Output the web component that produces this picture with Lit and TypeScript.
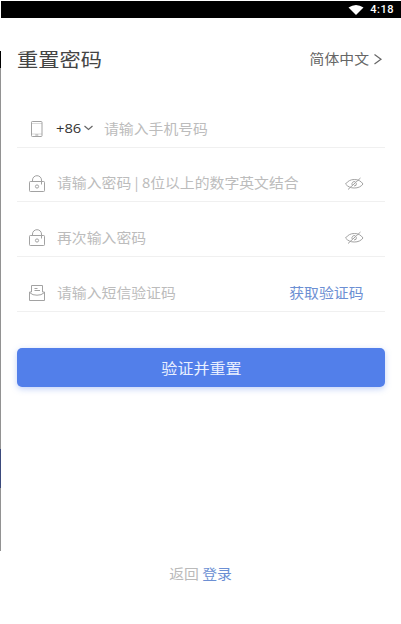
import { LitElement, html, css, svg } from "lit";
import { customElement } from "lit/decorators.js";

const phoneIcon = svg`<svg class="icon" width="18" height="18" viewBox="0 0 18 18"><rect x="3.500" y="2.500" width="10.500" height="15" rx=".8"/><path d="M4 4.500h10" opacity=".4"/><path d="M4 15h10" opacity=".4"/><path d="M7.300 16h3"/></svg>`;
const lockIcon = svg`<svg class="icon" width="18" height="18" viewBox="0 0 18 18"><path d="M4.500 7.500V6a4.500 4.300 0 0 1 9 0V10.500"/><rect x="1.500" y="7.500" width="15" height="10" rx=".8"/><circle cx="9" cy="12.500" r="1.600"/></svg>`;
const mailIcon = svg`<svg class="icon" width="18" height="18" viewBox="0 0 18 18"><path d="M3.500 9V2.500h11V9M6.500 5.500h3M6.500 7.500h5.500M3.500 9h-2v8.500h15V9h-2M1.500 9.500l3.500 2.200q4 1 8 0l3.500-2.200"/></svg>`;
const eyeIcon = svg`<svg class="icon" width="20" height="14" viewBox="0 0 20 14"><path d="M1.500 8C4 5 6.500 3.500 10.300 3.500S17 5 19 8C17 10.800 14 12 10.300 12S4 10.800 1.500 8z"/><path d="M4 13.500L16.500 2M8.200 9a2.400 2.400 0 0 1 3.200-3.200M12.400 7.200A2.400 2.400 0 0 1 10 10"/></svg>`;

@customElement("app-root")
export class AppRoot extends LitElement {
  static styles = css`
    :host {
      display: grid;
      grid-template-columns: 1px 1fr;
      box-sizing: border-box;
      height: 624px;
      background: #fff;
      overflow: hidden;
      font-family: "Noto Sans CJK SC", sans-serif;
      color: #333;
    }
    .edge {
      height: 551px;
      background: linear-gradient(#fff 51px, #000 51px 68px, #929292 68px 449px, #3b4a7c 449px 488px, #929292 488px);
    }
    .page { display: flex; flex-direction: column; padding-top: 1px; }
    .status {
      height: 17px;
      background: #000;
      color: #fff;
      display: flex;
      align-items: center;
      justify-content: flex-end;
      gap: 6px;
      padding: 1px 7px 0 0;
      font: 500 11px/16px Roboto, sans-serif;
      box-sizing: border-box;
    }
    .time { letter-spacing: 0.5px; }
    .t {
      display: inline-block;
      white-space: nowrap;
      transform: scaleX(1.1);
      transform-origin: left center;
      font-size: 13.5px;
      line-height: 20px;
    }
    .head {
      display: flex;
      align-items: center;
      justify-content: space-between;
      height: 82px;
      padding: 0 18px 0 16px;
      box-sizing: border-box;
    }
    .title { font-size: 19.3px; line-height: 28px; color: #444; }
    .lang { display: flex; align-items: center; gap: 4px; }
    .right { transform-origin: right center; }
    .center { transform-origin: center; }
    .lang .t { color: #666; margin-top: -2px; }
    .form { margin: -7px 16px 0; display: grid; grid-template-rows: 55px 54px 55px 55px; }
    .row {
      display: flex;
      align-items: center;
      box-sizing: border-box;
      padding: 16px 21px 0 11px;
      border-bottom: 1px solid #f0f0f0;
    }
    .icon { fill: none; stroke: #a2a2a2; stroke-width: 1; display: block; flex: none; }
    .hint { color: #bcbcbc; margin: -1px 0 0 11px; flex: 1; width: 0; }
    .code { font: 400 13.4px/20px "Open Sans", sans-serif; color: #333; margin-left: 10px; width: 28px; }
    .chev { fill: none; stroke: #666; stroke-width: 1.2; display: block; }
    .blue { color: #6c8fd3; }
    .row .blue { margin-right: 1px; }
    .button {
      margin: 36px 16px 0;
      height: 39px;
      border-radius: 5px;
      background: #527fea;
      box-shadow: 0 2px 6px rgba(81, 127, 234, 0.35);
      color: #e9f0ff;
      display: flex;
      align-items: center;
      justify-content: center;
      flex: none;
    }
    .button .t { font-size: 14.6px; }
    .foot { margin: 176px 0 0; display: flex; justify-content: center; }
    .back { color: #bababa; }
  `;

  render() {
    return html`
      <div class="edge"></div>
      <main class="page">
        <div class="status">
          <svg width="16" height="10" viewBox="0 0 16 10"><path d="M.5 2.500Q8-2.500 15.500 2.500L8 10z" fill="#fff"/></svg>
          <span class="time">4:18</span>
        </div>
        <header class="head">
          <span class="t title">重置密码</span>
          <div class="lang">
            <span class="t right">简体中文</span>
            <svg class="chev" width="10" height="12" viewBox="0 0 10 12"><path d="M1.500 1.500L8 6.200 1.500 11"/></svg>
          </div>
        </header>
        <section class="form">
          <div class="row">
            ${phoneIcon}<span class="t code">+86</span>
            <svg class="chev" width="9" height="6" viewBox="0 0 9 6"><path d="M.5 1L4.500 4.500 8.500 1"/></svg>
            <span class="t hint">请输入手机号码</span>
          </div>
          <div class="row">
            ${lockIcon}<span class="t hint">请输入密码 | 8位以上的数字英文结合</span>${eyeIcon}
          </div>
          <div class="row">
            ${lockIcon}<span class="t hint">再次输入密码</span>${eyeIcon}
          </div>
          <div class="row">
            ${mailIcon}<span class="t hint">请输入短信验证码</span><span class="t right blue">获取验证码</span>
          </div>
        </section>
        <div class="button"><span class="t center">验证并重置</span></div>
        <footer class="foot">
          <span class="t center"><span class="back">返回</span> <span class="blue">登录</span></span>
        </footer>
      </main>
    `;
  }
}
